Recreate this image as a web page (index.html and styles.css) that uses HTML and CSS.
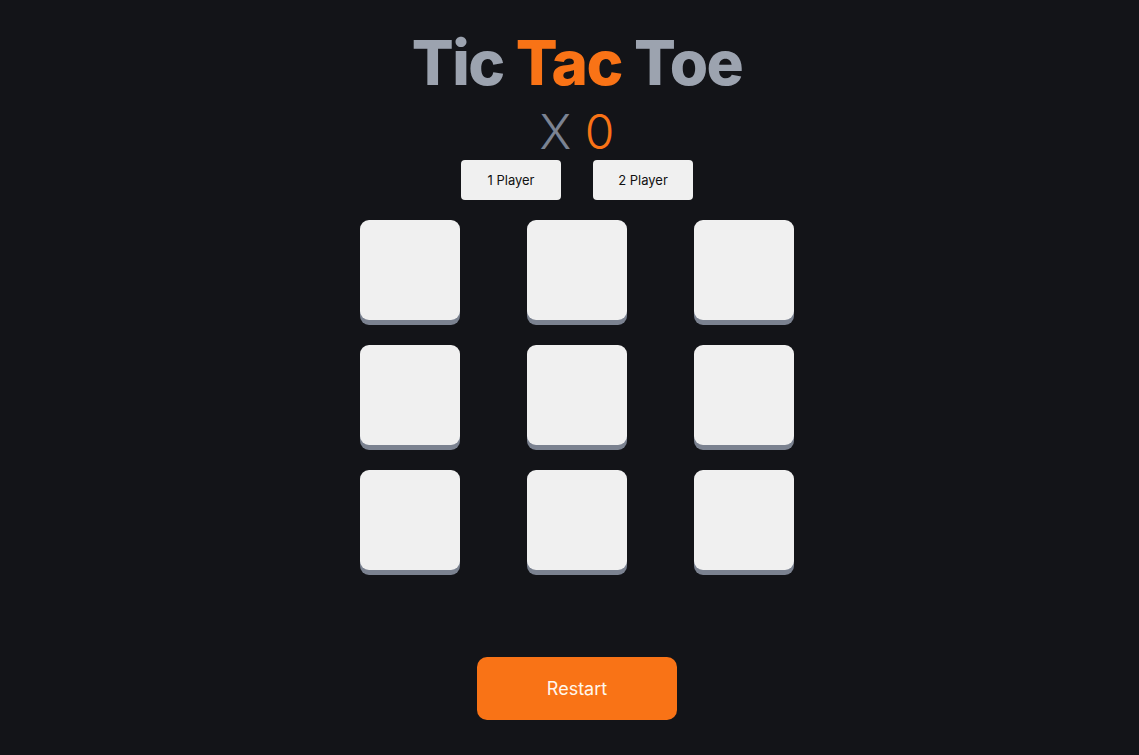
FILE: index.html
```html
<!DOCTYPE html>
<html lang="en">
<head>
<meta charset="utf-8">
<title>Tic Tac Toe</title>
<link rel="stylesheet" href="styles.css">
</head>
<body>
<main class="app">
  <h1 class="title">Tic <span class="accent">Tac</span> Toe</h1>
  <div class="turns"><span class="turn-x">X</span> <span class="turn-o">0</span></div>
  <div class="modes">
    <button class="mode">1 Player</button>
    <button class="mode">2 Player</button>
  </div>
  <div class="board">
    <div class="cell"></div><div class="cell"></div><div class="cell"></div>
    <div class="cell"></div><div class="cell"></div><div class="cell"></div>
    <div class="cell"></div><div class="cell"></div><div class="cell"></div>
  </div>
  <button class="restart">Restart</button>
</main>
</body>
</html>
```

FILE: styles.css
```css
html, body {
  margin: 0;
  padding: 0;
  background: #131418;
  height: 100%;
}
body {
  font-family: Inter, "Noto Sans", sans-serif;
}
.app {
  display: flex;
  flex-direction: column;
  align-items: center;
  padding: 23px 0 0 15px;
}
.title {
  margin: 0;
  font-size: 62px;
  font-weight: 800;
  letter-spacing: -1.5px;
  color: #9ca3af;
  line-height: 80px;
}
.accent { color: #f97316; }
.turns {
  margin-top: 1px;
  font-size: 48px;
  font-weight: 300;
  line-height: 56px;
}
.turn-x { color: #7b8392; }
.turn-o { color: #f97316; }
.modes {
  display: flex;
  gap: 32px;
}
.mode {
  width: 100px;
  height: 40px;
  border: none;
  border-radius: 4px;
  background: #f0f0f0;
  font-family: Inter, sans-serif;
  font-size: 13px;
  color: #111;
  cursor: pointer;
}
.board {
  display: grid;
  grid-template-columns: repeat(3, 100px);
  column-gap: 67px;
  row-gap: 25px;
  margin-top: 20px;
}
.cell {
  width: 100px;
  height: 100px;
  background: #f0f0f0;
  border-radius: 9px;
  box-shadow: 0 5px 0 #7b8290;
}
.restart {
  margin-top: 87px;
  width: 200px;
  height: 63px;
  border: none;
  border-radius: 10px;
  background: #f97316;
  color: #fff7ed;
  font-family: Inter, sans-serif;
  font-size: 18px;
  cursor: pointer;
}
```
